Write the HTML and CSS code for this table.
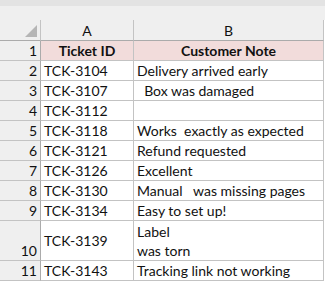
FILE: index.html
```html
<!DOCTYPE html>
<html>
<head>
<meta charset="utf-8">
<link rel="stylesheet" href="styles.css">
</head>
<body>
<div class="top"><div class="strip"></div></div>
<div class="sheet">
  <div class="hd corner"><span class="tri"></span></div>
  <div class="hd col">A</div>
  <div class="hd col">B</div>

  <div class="rn">1</div>
  <div class="c title ctr">Ticket ID</div>
  <div class="c title ctr">Customer Note</div>

  <div class="rn">2</div><div class="c">TCK-3104</div><div class="c">Delivery arrived early</div>
  <div class="rn">3</div><div class="c">TCK-3107</div><div class="c">  Box was damaged</div>
  <div class="rn">4</div><div class="c">TCK-3112</div><div class="c"></div>
  <div class="rn">5</div><div class="c">TCK-3118</div><div class="c">Works  exactly as expected</div>
  <div class="rn">6</div><div class="c">TCK-3121</div><div class="c">Refund requested</div>
  <div class="rn">7</div><div class="c">TCK-3126</div><div class="c">Excellent</div>
  <div class="rn">8</div><div class="c">TCK-3130</div><div class="c">Manual   was missing pages</div>
  <div class="rn">9</div><div class="c">TCK-3134</div><div class="c">Easy to set up!</div>
  <div class="rn tall">10</div><div class="c">TCK-3139</div><div class="c wrap">Label
was torn</div>
  <div class="rn">11</div><div class="c">TCK-3143</div><div class="c">Tracking link not working</div>
</div>
</body>
</html>
```
FILE: styles.css
```css
html, body {
  margin: 0;
  padding: 0;
  background: #ffffff;
}
body {
  font-family: Lato, "Liberation Sans", Arial, sans-serif;
  font-size: 14px;
  color: #111;
}
.top {
  height: 20px;
  background: #efefef;
  width: 325px;
}
.strip {
  height: 6px;
  background: #e3e3e3;
}
.sheet {
  display: grid;
  grid-template-columns: 41px 93px 190px;
  grid-template-rows: 21px repeat(9, 20px) 40px 20px;
  width: 324px;
}
.sheet > div {
  box-sizing: border-box;
  border-right: 1px solid #c3c3c3;
  border-bottom: 1px solid #c3c3c3;
  display: flex;
  align-items: center;
  white-space: pre;
  line-height: 19px;
}
.hd {
  background: #efefef;
  justify-content: center;
  border-bottom-color: #ababab !important;
}
.corner {
  justify-content: flex-end !important;
  align-items: flex-end !important;
  padding: 0 3px 3px 0;
}
.tri {
  display: block;
  width: 12px;
  height: 12px;
  background: #b5b5b5;
  clip-path: polygon(100% 0, 100% 100%, 0 100%);
}
.rn {
  background: #efefef;
  justify-content: flex-end;
  padding-right: 3px;
  border-right-color: #ababab !important;
}
.rn.tall {
  align-items: flex-end;
}
.c {
  background: #ffffff;
  padding-left: 3px;
}
.title {
  background: #f2dcdb;
  font-weight: bold;
}
.ctr {
  justify-content: center;
  padding-left: 0;
}
.wrap {
  align-items: flex-end;
}
```
